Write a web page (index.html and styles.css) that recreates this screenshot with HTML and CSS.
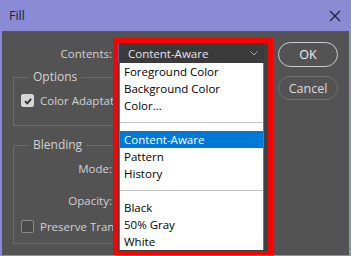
FILE: index.html
```html
<!DOCTYPE html>
<html>
<head>
<meta charset="utf-8">
<link rel="stylesheet" href="styles.css">
</head>
<body>
<div class="window">
  <div class="titlebar">
    <span class="title">Fill</span>
    <svg class="close" width="12" height="12" viewBox="0 0 12 12"><path d="M1 1L11 11M11 1L1 11" stroke="#1c1c30" stroke-width="1.1" fill="none"/></svg>
  </div>
  <div class="body">
    <div class="form">
      <div class="row contents-row">
        <span class="label">Contents:</span>
        <div class="combo-slot">
          <div class="annot">
            <div class="select">
              <span>Content-Aware</span>
              <svg class="chev" width="8" height="5" viewBox="0 0 8 5"><path d="M0.5 0.5L4 4L7.5 0.5" stroke="#a8a8a8" stroke-width="1" fill="none"/></svg>
            </div>
            <ul class="menu">
              <li>Foreground Color</li>
              <li>Background Color</li>
              <li>Color...</li>
              <li class="sep"></li>
              <li class="active">Content-Aware</li>
              <li>Pattern</li>
              <li>History</li>
              <li class="sep"></li>
              <li>Black</li>
              <li>50% Gray</li>
              <li>White</li>
            </ul>
          </div>
        </div>
      </div>
      <div class="group options">
        <span class="legend">Options</span>
        <label class="check-row"><span class="box checked"><svg width="10" height="10" viewBox="0 0 10 10"><path d="M2 5.2L4.2 7.4L8.2 2.8" stroke="#2e2e2e" stroke-width="1.8" fill="none"/></svg></span>Color Adaptation</label>
      </div>
      <div class="group blending">
        <span class="legend">Blending</span>
        <div class="row field mode"><span class="label">Mode:</span></div>
        <div class="row field opacity"><span class="label">Opacity:</span></div>
        <label class="check-row preserve"><span class="box"></span>Preserve Transparency</label>
      </div>
    </div>
    <div class="buttons">
      <div class="btn ok">OK</div>
      <div class="btn cancel">Cancel</div>
    </div>
  </div>
</div>
</body>
</html>
```
FILE: styles.css
```css
* { box-sizing: border-box; }
html, body { margin: 0; padding: 0; }
body {
  width: 351px;
  height: 256px;
  overflow: hidden;
  font-family: "Open Sans", "Noto Sans", sans-serif;
  font-size: 11.5px;
}
.window {
  width: 351px;
  height: 256px;
  background: #8b8bd5;
  display: flex;
  flex-direction: column;
  padding: 0 2px 1px 2px;
}
.titlebar {
  height: 31px;
  display: flex;
  align-items: center;
  justify-content: space-between;
  padding: 0 9px 0 7px;
  flex: none;
}
.title {
  color: #1d1d33;
  font-size: 12.5px;
}
.close { margin-right: -1px; }
.body {
  flex: 1;
  background: #535353;
  display: flex;
  overflow: hidden;
}
.form {
  flex: 1;
  padding: 12px 0 0 11px;
  display: flex;
  flex-direction: column;
}
.row {
  display: flex;
  align-items: center;
}
.label {
  width: 99px;
  text-align: right;
  color: #d2d2d2;
  flex: none;
}
.contents-row {
  height: 20px;
  gap: 6px;
}
.combo-slot {
  width: 146px;
  height: 20px;
  position: relative;
  z-index: 2;
}
.annot {
  position: absolute;
  left: -5px;
  top: -5px;
  width: 160px;
  height: 218px;
  border: 5px solid #ff0000;
  background: #404040;
}
.select {
  height: 20px;
  width: 146px;
  background: #3a3a3a;
  border-left: 1px solid #3f6f9a;
  color: #e6e6e6;
  display: flex;
  align-items: center;
  justify-content: space-between;
  padding: 0 6px 0 9px;
}
.chev { margin-top: 1px; }
.menu {
  list-style: none;
  margin: 0 0 0 1px;
  padding: 0;
  width: 145px;
  background: #ffffff;
  border-left: 1px solid #2b8ad8;
  border-right: 1px solid #2b8ad8;
}
.menu li {
  height: 17px;
  line-height: 17px;
  padding-left: 4px;
  color: #000;
  white-space: nowrap;
}
.menu li.active {
  background: #0078d7;
  color: #fff;
}
.menu li.sep {
  display: flex;
  align-items: center;
  padding: 0;
}
.menu li.sep::after {
  content: "";
  flex: 1;
  height: 1px;
  background: #c4c4c4;
}
.group {
  border: 1px solid #6a6a6a;
  width: 250px;
  display: flex;
  flex-direction: column;
}
.legend {
  align-self: flex-start;
  margin: -9px 0 0 15px;
  padding: 0 4px;
  background: #535353;
  color: #d2d2d2;
  font-size: 12px;
  line-height: 16px;
}
.options {
  margin-top: 14px;
  height: 49px;
}
.check-row {
  display: flex;
  align-items: center;
  gap: 6px;
  color: #d2d2d2;
  white-space: nowrap;
  margin-left: 7px;
}
.options .check-row { margin-top: 8px; }
.box {
  width: 13px;
  height: 13px;
  flex: none;
  border-radius: 2px;
  display: flex;
  align-items: center;
  justify-content: center;
  border: 1px solid #8a8a8a;
  background: #4a4a4a;
}
.box.checked {
  background: #d6d6d6;
  border-color: #d6d6d6;
}
.blending {
  margin-top: 19px;
  height: 99px;
}
.field .label { width: 98px; }
.mode { margin-top: 7px; height: 16px; }
.opacity { margin-top: 16px; height: 16px; }
.preserve { margin-top: 11px; }
.buttons {
  width: 60px;
  flex: none;
  margin: 11px 11px 0 8px;
  display: flex;
  flex-direction: column;
  gap: 9px;
}
.btn {
  height: 25px;
  border-radius: 13px;
  display: flex;
  align-items: center;
  justify-content: center;
  font-size: 12.5px;
}
.ok {
  border: 1.5px solid #cfcfcf;
  color: #f2f2f2;
}
.cancel {
  height: 24px;
  border: 1.5px solid #707070;
  color: #dcdcdc;
}
```
